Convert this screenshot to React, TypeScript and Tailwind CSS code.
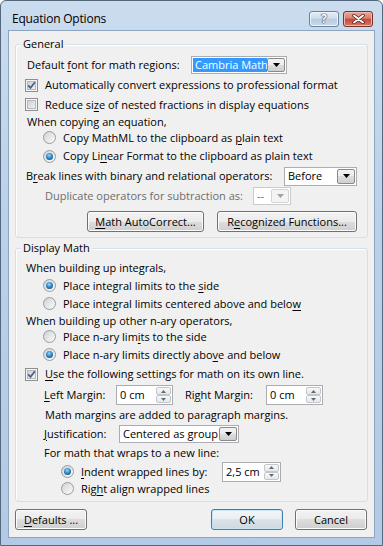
import React from "react";

const U = ({ children }: { children: React.ReactNode }) => (
  <span className="underline decoration-[1px] underline-offset-[2px]">{children}</span>
);

function Check({ checked }: { checked?: boolean }) {
  return (
    <span className="flex h-[13px] w-[13px] shrink-0 border border-[#8e8f8f] bg-[#f4f4f4] p-[1px]">
      <span className="flex h-full w-full items-center justify-center bg-[linear-gradient(135deg,#c9cdd2,#f4f4f4)] shadow-[inset_0_0_0_1px_#b5bac0]">
        {checked && (
          <svg width="9" height="9" viewBox="0 0 9 9">
            <path d="M1.2 4.4 L3.5 6.9 L7.9 1.3" fill="none" stroke="#4a5f8c" strokeWidth="1.7" />
          </svg>
        )}
      </span>
    </span>
  );
}

function Radio({ checked }: { checked?: boolean }) {
  return (
    <span className="flex h-[13px] w-[13px] shrink-0 items-center justify-center rounded-full border border-[#9a9b9c] bg-[linear-gradient(135deg,#cfd2d6,#fbfbfb)]">
      {checked && (
        <span className="h-[7px] w-[7px] rounded-full bg-[radial-gradient(circle_at_45%_35%,#9bdaf8_0%,#2f8acb_45%,#0f3a62_100%)]" />
      )}
    </span>
  );
}

function Arrow({ disabled }: { disabled?: boolean }) {
  return (
    <svg width="7" height="4" viewBox="0 0 7 4">
      <polygon points="0,0 7,0 3.5,4" fill={disabled ? "#a3a3a3" : "#000"} />
    </svg>
  );
}

function Combo({
  cls,
  text,
  selected,
  disabled,
}: {
  cls: string;
  text: string;
  selected?: boolean;
  disabled?: boolean;
}) {
  return (
    <div
      className={`${cls} flex shrink-0 border p-[1px] ${
        disabled ? "border-[#c9cbce] bg-white text-[#6d6d6d]" : "border-[#abadb3] bg-white"
      }`}
    >
      <span
        className={`flex flex-1 items-center overflow-hidden whitespace-nowrap pl-[2px] ${
          selected ? "bg-[#3399ff] text-white" : ""
        }`}
      >
        {text}
      </span>
      <span
        className={`flex w-[18px] items-center justify-center rounded-[2px] border ${
          disabled
            ? "border-[#d4d4d4] bg-[#f4f4f4]"
            : "border-[#8a8a8a] bg-[linear-gradient(#f2f2f2,#ebebeb_50%,#dddddd_50%,#cfcfcf)]"
        }`}
      >
        <Arrow disabled={disabled} />
      </span>
    </div>
  );
}

function SpinBtn({ up }: { up?: boolean }) {
  return (
    <span className="flex flex-1 items-center justify-center rounded-[2px] border border-[#c3c6cb] bg-[linear-gradient(#f8f8f8,#e6e7e9)]">
      <svg width="5" height="3" viewBox="0 0 5 3">
        <polygon points={up ? "0,3 5,3 2.5,0" : "0,0 5,0 2.5,3"} fill="#5f6b7a" />
      </svg>
    </span>
  );
}

function Spin({ cls, text }: { cls: string; text: string }) {
  return (
    <div className={`${cls} flex h-[20px] shrink-0 border border-[#abadb3] bg-white`}>
      <span className="flex flex-1 items-center pl-[3px]">{text}</span>
      <span className="my-[1px] mr-[1px] flex w-[15px] flex-col">
        <SpinBtn up />
        <SpinBtn />
      </span>
    </div>
  );
}

function Btn({
  cls,
  children,
  primary,
}: {
  cls: string;
  children: React.ReactNode;
  primary?: boolean;
}) {
  return (
    <div
      className={`${cls} flex h-[21px] shrink-0 items-center justify-center rounded-[3px] border ${
        primary
          ? "border-[#3c7fb1] bg-[linear-gradient(#f2f6f9,#eaeff3_50%,#dbe3e9_50%,#cfd8df)] shadow-[inset_0_0_0_1px_#c6e6f7]"
          : "border-[#707070] bg-[linear-gradient(#f2f2f2,#ebebeb_50%,#dddddd_50%,#cfcfcf)] shadow-[inset_0_0_0_1px_#fcfcfc]"
      }`}
    >
      {children}
    </div>
  );
}

function Group({ title, cls, children }: { title: string; cls: string; children: React.ReactNode }) {
  return (
    <div className={`${cls} relative mx-[6px] flex flex-col rounded-[3px] border border-[#d5dfe5] shadow-[inset_1px_1px_0_#ffffff]`}>
      <span className="absolute -top-[8px] left-[5px] h-[14px] bg-[#f0f0f0] px-[2px] leading-[14px]">{title}</span>
      {children}
    </div>
  );
}

export default function App() {
  return (
    <div className="h-[546px] w-[383px] font-['Open_Sans','Segoe_UI',sans-serif] text-[11px] leading-[14px] text-black">
      <div className="flex h-[546px] w-[383px] flex-col rounded-t-[6px] border border-[#56687e] bg-[linear-gradient(#cadcee,#bbd1ea_40%,#b2cae5)] px-[7px] pb-[7px]">
        {/* Title bar */}
        <div className="flex h-[29px] items-center pt-[7px]">
          <span className="ml-[4px] text-[12px] tracking-[-0.2px]">Equation Options</span>
          <div className="ml-auto mr-[2px] flex gap-[4px]">
            <div className="flex h-[16px] w-[30px] items-center justify-center rounded-[3px] border border-[#6b819c] bg-[linear-gradient(#e4edf6,#cfdeed_45%,#b7cce2_50%,#c6d8ec)] shadow-[inset_0_0_0_1px_#eef4fa]">
              <span className="text-[12px] font-bold leading-none text-white [text-shadow:0_0_1px_#2c3e55,0_0_1px_#2c3e55,0_0_1px_#2c3e55]">?</span>
            </div>
            <div className="flex h-[16px] w-[30px] items-center justify-center rounded-[3px] border border-[#7b2f27] bg-[linear-gradient(#e9a99a,#d9806c_45%,#c4473a_50%,#d07c66)] shadow-[inset_0_0_0_1px_#efb8ac]">
              <svg width="13" height="10" viewBox="0 0 13 10">
                <path d="M2 1.5 L11 8.5 M11 1.5 L2 8.5" stroke="#4d1a14" strokeWidth="3.4" strokeLinecap="round" />
                <path d="M2 1.5 L11 8.5 M11 1.5 L2 8.5" stroke="#ffffff" strokeWidth="2" strokeLinecap="round" />
              </svg>
            </div>
          </div>
        </div>

        {/* Client */}
        <div className="flex flex-1 flex-col border border-[#8ea5c0] bg-[#f0f0f0]">
          <div className="h-[13px]" />
          <Group title="General" cls="h-[194px]">
            <div className="h-[10px]" />
            <div className="flex h-[20px] items-center pl-[11px]">
              <span className="w-[164px]">
                Default <U>f</U>ont for math regions:
              </span>
              <Combo cls="h-[18px] w-[96px]" text="Cambria Math" selected />
            </div>
            <div className="flex h-[20px] items-center gap-[7px] pl-[9px]">
              <Check checked />
              <span>Automatically convert expressions to professional format</span>
            </div>
            <div className="flex h-[19px] items-center gap-[7px] pl-[9px]">
              <Check />
              <span>
                Reduce si<U>z</U>e of nested fractions in display equations
              </span>
            </div>
            <div className="flex h-[15px] items-center pl-[11px]">When copying an equation,</div>
            <div className="flex h-[17px] items-center gap-[7px] pl-[27px]">
              <Radio />
              <span>
                Copy MathML to the clipboard as <U>p</U>lain text
              </span>
            </div>
            <div className="flex h-[20px] items-center gap-[7px] pl-[27px]">
              <Radio checked />
              <span>
                Copy Li<U>n</U>ear Format to the clipboard as plain text
              </span>
            </div>
            <div className="flex h-[20px] items-center pl-[10px]">
              <span className="w-[258px]">
                B<U>r</U>eak lines with binary and relational operators:
              </span>
              <Combo cls="h-[19px] w-[73px]" text="Before" />
            </div>
            <div className="flex h-[20px] items-center pl-[29px] text-[#6d6d6d]">
              <span className="w-[208px]">Duplicate operators for subtraction as:</span>
              <Combo cls="h-[18px] w-[38px]" text="--" disabled />
            </div>
            <div className="h-[5px]" />
            <div className="flex items-center gap-[13px] pl-[71px]">
              <Btn cls="w-[117px]">
                <span>
                  <U>M</U>ath AutoCorrect...
                </span>
              </Btn>
              <Btn cls="w-[140px]">
                <span>
                  R<U>e</U>cognized Functions...
                </span>
              </Btn>
            </div>
          </Group>

          <div className="h-[10px]" />

          <Group title="Display Math" cls="h-[254px]">
            <div className="h-[10px]" />
            <div className="flex h-[18px] items-center pl-[10px]">When building up integrals,</div>
            <div className="flex h-[17px] items-center gap-[7px] pl-[27px]">
              <Radio checked />
              <span>
                Place integral limits to the <U>s</U>ide
              </span>
            </div>
            <div className="flex h-[19px] items-center gap-[7px] pl-[27px]">
              <Radio />
              <span>
                Place integral limits centered above and belo<U>w</U>
              </span>
            </div>
            <div className="flex h-[15px] items-center pl-[10px]">When building up other n-ary operators,</div>
            <div className="flex h-[17px] items-center gap-[7px] pl-[27px]">
              <Radio />
              <span>
                Place n-ary lim<U>i</U>ts to the side
              </span>
            </div>
            <div className="flex h-[19px] items-center gap-[7px] pl-[27px]">
              <Radio checked />
              <span>
                Place n-ary limits directly abo<U>v</U>e and below
              </span>
            </div>
            <div className="flex h-[20px] items-center gap-[7px] pl-[9px]">
              <Check checked />
              <span>
                <U>U</U>se the following settings for math on its own line.
              </span>
            </div>
            <div className="flex h-[22px] items-center pl-[28px]">
              <span className="w-[72px]">
                <U>L</U>eft Margin:
              </span>
              <Spin cls="w-[57px]" text="0 cm" />
              <span className="ml-[12px] w-[81px]">
                Ri<U>g</U>ht Margin:
              </span>
              <Spin cls="w-[57px]" text="0 cm" />
            </div>
            <div className="flex h-[18px] items-center pl-[29px]">Math margins are added to paragraph margins.</div>
            <div className="flex h-[19px] items-center pl-[28px]">
              <span className="w-[75px]">
                <U>J</U>ustification:
              </span>
              <Combo cls="h-[18px] w-[120px]" text="Centered as group" />
            </div>
            <div className="flex h-[19px] items-center pl-[28px]">For math that wraps to a new line:</div>
            <div className="flex h-[19px] items-center pl-[45px]">
              <span className="flex w-[161px] items-center gap-[7px]">
                <Radio checked />
                <span>
                  <U>I</U>ndent wrapped lines by:
                </span>
              </span>
              <Spin cls="w-[59px]" text="2,5 cm" />
            </div>
            <div className="flex h-[15px] items-center gap-[7px] pl-[45px]">
              <Radio />
              <span>
                Rig<U>h</U>t align wrapped lines
              </span>
            </div>
          </Group>

          <div className="h-[7px]" />
          <div className="flex items-center px-[6px]">
            <Btn cls="w-[72px]">
              <span>
                <U>D</U>efaults ...
              </span>
            </Btn>
            <div className="ml-auto mr-[1px] flex gap-[12px]">
              <Btn cls="w-[72px]" primary>
                <span>OK</span>
              </Btn>
              <Btn cls="w-[72px]">
                <span>Cancel</span>
              </Btn>
            </div>
          </div>
        </div>
      </div>
    </div>
  );
}
